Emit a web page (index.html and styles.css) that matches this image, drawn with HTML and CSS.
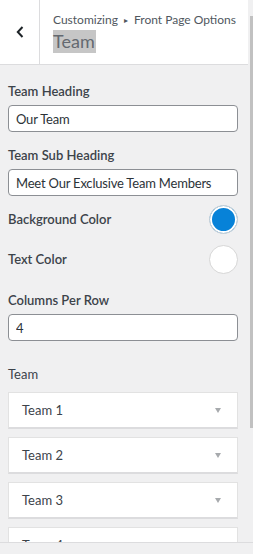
FILE: index.html
```html
<!DOCTYPE html>
<html lang="en">
<head>
    <meta charset="UTF-8">
    <meta name="viewport" content="width=device-width, initial-scale=1.0">
    <title>Team</title>
    <link rel="stylesheet" href="styles.css">
</head>
<body>
    <div class="panel">
        <div class="head">
            <div class="back">
                <svg width="8" height="12" viewBox="0 0 8 12"><path d="M6.5 1 L1.8 6 L6.5 11" fill="none" stroke="#1d2327" stroke-width="2"/></svg>
            </div>
            <div class="titles">
                <div class="crumb">Customizing <span class="sep">&#9656;</span> Front Page Options</div>
                <div class="title"><span>Team</span></div>
            </div>
        </div>

        <div class="content">
            <div class="control">
                <label>Team Heading</label>
                <input type="text" value="Our Team">
            </div>
            <div class="control">
                <label>Team Sub Heading</label>
                <input type="text" value="Meet Our Exclusive Team Members">
            </div>
            <div class="color-row first">
                <label>Background Color</label>
                <span class="swatch blue"></span>
            </div>
            <div class="color-row">
                <label>Text Color</label>
                <span class="swatch white"></span>
            </div>
            <div class="control columns">
                <label>Columns Per Row</label>
                <input type="text" value="4">
            </div>
            <div class="repeater">
                <div class="repeater-title">Team</div>
                <div class="item"><span>Team 1</span><i class="caret"></i></div>
                <div class="item"><span>Team 2</span><i class="caret"></i></div>
                <div class="item"><span>Team 3</span><i class="caret"></i></div>
                <div class="item"><span>Team 4</span><i class="caret"></i></div>
            </div>
        </div>
    </div>

    <div class="scrollbar"><div class="thumb"></div></div>
    <div class="footer"></div>
</body>
</html>
```

FILE: styles.css
```css
body {
    margin: 0;
    background: #f0f0f1;
    font-family: Lato, "Noto Sans", sans-serif;
    color: #3c434a;
    overflow: hidden;
}
.panel {
    width: 248px;
}
.head {
    display: flex;
    height: 64px;
    background: #fff;
    border-bottom: 1px solid #dcdcde;
}
.back {
    flex-shrink: 0;
    width: 39px;
    border-right: 1px solid #dcdcde;
    display: flex;
    align-items: center;
    justify-content: center;
}
.titles {
    padding: 11px 0 0 13px;
}
.crumb {
    font-size: 12px;
    line-height: 18px;
    color: #50575e;
    white-space: nowrap;
}
.sep {
    font-size: 8px;
    vertical-align: 1px;
    padding: 0 3px;
}
.title {
    margin-top: 1px;
}
.title span {
    display: inline-block;
    font-size: 18px;
    line-height: 23px;
    color: #646970;
    background: #c6c6c6;
    padding-right: 1px;
}
.content {
    padding: 17px 10px 0 8px;
}
label {
    display: block;
    font-size: 13px;
    font-weight: 600;
    line-height: 18px;
    color: #3c434a;
}
.control {
    margin-bottom: 14px;
}
.control label {
    margin-bottom: 5px;
}
input[type="text"] {
    display: block;
    width: 100%;
    height: 27px;
    box-sizing: border-box;
    border: 1px solid #8c8f94;
    border-radius: 4px;
    padding: 0 7px;
    font-family: inherit;
    font-size: 13px;
    letter-spacing: -0.2px;
    color: #2c3338;
    background: #fff;
}
.color-row {
    display: flex;
    align-items: center;
    justify-content: space-between;
    height: 28px;
    margin-bottom: 12px;
}
.color-row.first {
    margin-top: -5px;
}
.swatch {
    width: 29px;
    height: 29px;
    box-sizing: border-box;
    border-radius: 50%;
    border: 1px solid #d6d6d6;
    box-shadow: inset 0 0 0 2px #fff;
}
.swatch.blue {
    background: #0782d8;
}
.swatch.white {
    background: #fff;
}
.columns {
    margin-top: 18px;
    margin-bottom: 24px;
}
.repeater-title {
    font-size: 13px;
    line-height: 18px;
    margin-bottom: 9px;
}
.item {
    display: flex;
    align-items: center;
    justify-content: space-between;
    height: 34px;
    background: #fff;
    border: 1px solid #e2e2e2;
    border-bottom: 2px solid #dcdcde;
    padding: 0 16px 0 13px;
    margin-bottom: 8px;
    font-size: 13px;
    color: #3c434a;
}
.caret {
    width: 0;
    height: 0;
    border-left: 3.5px solid transparent;
    border-right: 3.5px solid transparent;
    border-top: 5px solid #a7aaad;
}
.scrollbar {
    position: fixed;
    top: 0;
    right: 0;
    width: 5px;
    height: 100%;
    background: #f0f0f1;
}
.thumb {
    margin: 16px 0 0 2px;
    width: 3px;
    height: 412px;
    background: #c1c1c1;
}
.footer {
    position: fixed;
    left: 0;
    right: 0;
    bottom: 0;
    height: 11px;
    border-top: 1px solid #dcdcde;
    background: #f0f0f1;
}
```
